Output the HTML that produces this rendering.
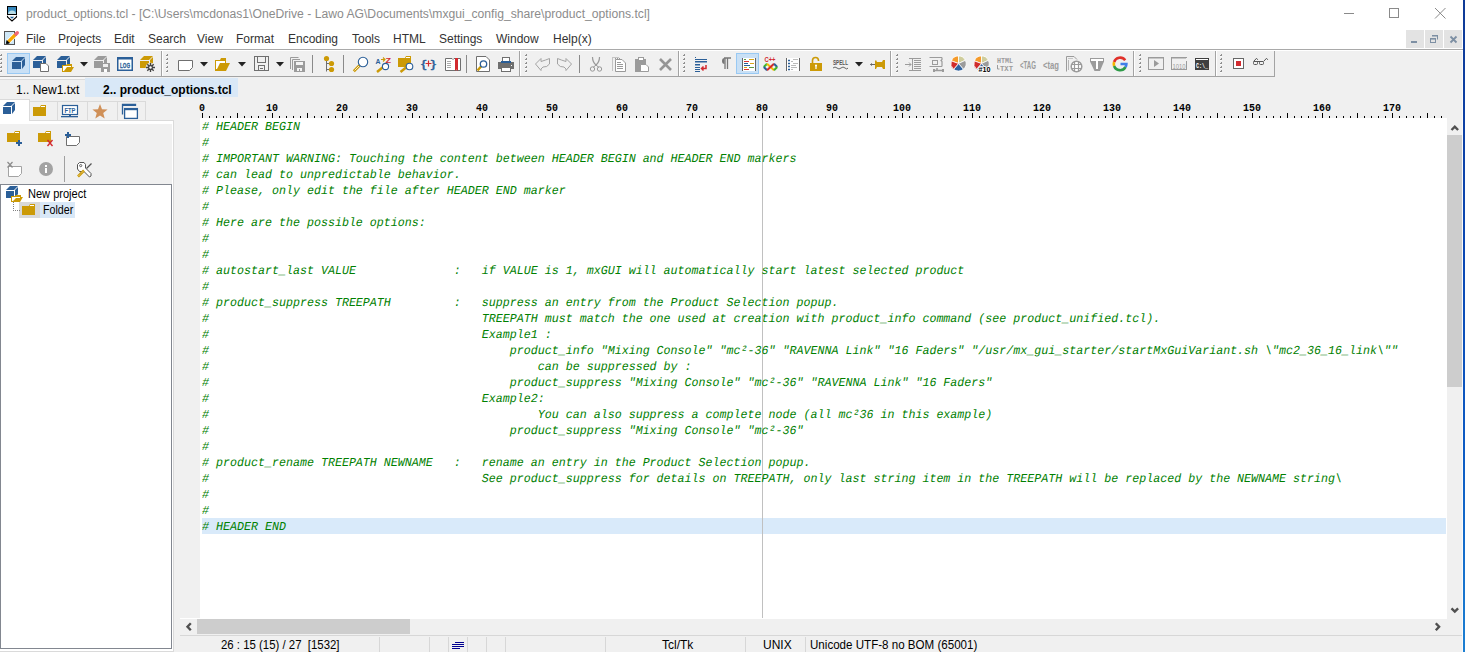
<!DOCTYPE html>
<html><head><meta charset="utf-8">
<style>
*{margin:0;padding:0;box-sizing:border-box}
html,body{width:1465px;height:652px;overflow:hidden;background:#f0f0f0;font-family:"Liberation Sans",sans-serif;position:relative}
.a{position:absolute}
#title{left:0;top:0;width:1465px;height:49px;background:#fff}
#ttext{left:26px;top:7px;font-size:12.5px;transform:scaleX(0.973);transform-origin:0 0;color:#8c8c8c;white-space:nowrap}
.menu{top:32px;font-size:12px;color:#333;white-space:nowrap}
#mline{left:0;top:49px;width:1463px;height:1px;background:#a9a9a9}
#blue{left:1463px;top:0;width:2px;height:652px;background:linear-gradient(#0f3a96,#0b48b4 40%,#0d5cc4 70%,#1c7fd2)}
.mdi{top:30px;width:18px;height:18px;background:#e3e3e3}
#code{left:202px;top:119px;font-family:"Liberation Mono",monospace;font-style:italic;font-size:12.2px;line-height:16px;transform:scaleX(0.9563);text-rendering:geometricPrecision;transform-origin:0 0;color:#008000;white-space:pre}
#editor{left:200px;top:118px;width:1247px;height:501px;background:#fff}
#hl{left:202px;top:518px;width:1244px;height:16px;background:#d9eafa}
#edge{left:762px;top:118px;width:1px;height:500px;background:#c0c0c0}
#ruler{left:178px;top:97px;width:1268px;height:21px}
.rn{top:104px;width:80px;text-align:center;font-family:"Liberation Mono",monospace;font-weight:bold;font-size:10px;line-height:10px;color:#000}
#status{left:178px;top:635px;width:1285px;height:17px;font-size:12px}
#panel{left:0;top:120px;width:174px;height:530px}

#tb{left:0;top:50px;width:1463px;height:1px;background:#fff}
#tbb{left:0;top:76px;width:1275px;height:1px;background:#a3a3a3}
#tabs{left:0;top:77px;width:1463px;height:20px}
.tab{top:78px;height:19px;font-size:12px;white-space:nowrap}
#ptabs{left:0;top:97px;width:174px;height:24px}
.ptab{top:101px;height:20px;border:1px solid #dadada;border-bottom:1px solid #dadada;background:#f0f0f0}
#pbody{left:0;top:120px;width:174px;height:532px;background:#f0f0f0;border-top:1px solid #dadada;border-right:1px solid #dadada;box-shadow:inset 0 3px #fff,inset -1px 0 #fff}
#tree{left:0;top:184px;width:172px;height:465px;background:#fff;border:1px solid #828790}
.tt{font-size:12px;color:#000;white-space:nowrap}
#hsb{left:180px;top:619px;width:1282px;height:17px;background:#f0f0f0;border-bottom:1px solid #d7d7d7}
#hsbw{left:180px;top:618px;width:1267px;height:1px;background:#fff}
#hthumb{left:197px;top:619px;width:213px;height:15px;background:#cdcdcd}
#vthumb{left:1447px;top:135px;width:15px;height:252px;background:#cdcdcd}
.st{top:638px;transform-origin:0 0;font-size:12px;color:#000;white-space:nowrap}
.ss{top:637px;width:1px;height:16px;background:#d7d7d7}
</style></head><body>
<div class="a" id="title"></div>
<div class="a" id="ttext">product_options.tcl - [C:\Users\mcdonas1\OneDrive - Lawo AG\Documents\mxgui_config_share\product_options.tcl]</div>
<div class="a menu" style="left:26px">File</div>
<div class="a menu" style="left:58px">Projects</div>
<div class="a menu" style="left:114px">Edit</div>
<div class="a menu" style="left:148px">Search</div>
<div class="a menu" style="left:197px">View</div>
<div class="a menu" style="left:236px">Format</div>
<div class="a menu" style="left:288px">Encoding</div>
<div class="a menu" style="left:352px">Tools</div>
<div class="a menu" style="left:393px">HTML</div>
<div class="a menu" style="left:439px">Settings</div>
<div class="a menu" style="left:496px">Window</div>
<div class="a menu" style="left:553px">Help(x)</div>
<div class="a mdi" style="left:1406px"></div>
<div class="a mdi" style="left:1425px"></div>
<div class="a mdi" style="left:1444px"></div>
<div class="a" id="mline"></div>

<div class="a" id="rulerwrap">
<div class="a rn" style="left:162px">0</div>
<div class="a rn" style="left:232px">10</div>
<div class="a rn" style="left:302px">20</div>
<div class="a rn" style="left:372px">30</div>
<div class="a rn" style="left:442px">40</div>
<div class="a rn" style="left:512px">50</div>
<div class="a rn" style="left:582px">60</div>
<div class="a rn" style="left:652px">70</div>
<div class="a rn" style="left:722px">80</div>
<div class="a rn" style="left:792px">90</div>
<div class="a rn" style="left:862px">100</div>
<div class="a rn" style="left:932px">110</div>
<div class="a rn" style="left:1002px">120</div>
<div class="a rn" style="left:1072px">130</div>
<div class="a rn" style="left:1142px">140</div>
<div class="a rn" style="left:1212px">150</div>
<div class="a rn" style="left:1282px">160</div>
<div class="a rn" style="left:1352px">170</div>
<svg class="a" style="left:200px;top:110px" width="1246" height="8"><rect x="2" y="3" width="1" height="5"/><rect x="9" y="6" width="1" height="2"/><rect x="16" y="6" width="1" height="2"/><rect x="23" y="6" width="1" height="2"/><rect x="30" y="6" width="1" height="2"/><rect x="37" y="3" width="1" height="5"/><rect x="44" y="6" width="1" height="2"/><rect x="51" y="6" width="1" height="2"/><rect x="58" y="6" width="1" height="2"/><rect x="65" y="6" width="1" height="2"/><rect x="72" y="3" width="1" height="5"/><rect x="79" y="6" width="1" height="2"/><rect x="86" y="6" width="1" height="2"/><rect x="93" y="6" width="1" height="2"/><rect x="100" y="6" width="1" height="2"/><rect x="107" y="3" width="1" height="5"/><rect x="114" y="6" width="1" height="2"/><rect x="121" y="6" width="1" height="2"/><rect x="128" y="6" width="1" height="2"/><rect x="135" y="6" width="1" height="2"/><rect x="142" y="3" width="1" height="5"/><rect x="149" y="6" width="1" height="2"/><rect x="156" y="6" width="1" height="2"/><rect x="163" y="6" width="1" height="2"/><rect x="170" y="6" width="1" height="2"/><rect x="177" y="3" width="1" height="5"/><rect x="184" y="6" width="1" height="2"/><rect x="191" y="6" width="1" height="2"/><rect x="198" y="6" width="1" height="2"/><rect x="205" y="6" width="1" height="2"/><rect x="212" y="3" width="1" height="5"/><rect x="219" y="6" width="1" height="2"/><rect x="226" y="6" width="1" height="2"/><rect x="233" y="6" width="1" height="2"/><rect x="240" y="6" width="1" height="2"/><rect x="247" y="3" width="1" height="5"/><rect x="254" y="6" width="1" height="2"/><rect x="261" y="6" width="1" height="2"/><rect x="268" y="6" width="1" height="2"/><rect x="275" y="6" width="1" height="2"/><rect x="282" y="3" width="1" height="5"/><rect x="289" y="6" width="1" height="2"/><rect x="296" y="6" width="1" height="2"/><rect x="303" y="6" width="1" height="2"/><rect x="310" y="6" width="1" height="2"/><rect x="317" y="3" width="1" height="5"/><rect x="324" y="6" width="1" height="2"/><rect x="331" y="6" width="1" height="2"/><rect x="338" y="6" width="1" height="2"/><rect x="345" y="6" width="1" height="2"/><rect x="352" y="3" width="1" height="5"/><rect x="359" y="6" width="1" height="2"/><rect x="366" y="6" width="1" height="2"/><rect x="373" y="6" width="1" height="2"/><rect x="380" y="6" width="1" height="2"/><rect x="387" y="3" width="1" height="5"/><rect x="394" y="6" width="1" height="2"/><rect x="401" y="6" width="1" height="2"/><rect x="408" y="6" width="1" height="2"/><rect x="415" y="6" width="1" height="2"/><rect x="422" y="3" width="1" height="5"/><rect x="429" y="6" width="1" height="2"/><rect x="436" y="6" width="1" height="2"/><rect x="443" y="6" width="1" height="2"/><rect x="450" y="6" width="1" height="2"/><rect x="457" y="3" width="1" height="5"/><rect x="464" y="6" width="1" height="2"/><rect x="471" y="6" width="1" height="2"/><rect x="478" y="6" width="1" height="2"/><rect x="485" y="6" width="1" height="2"/><rect x="492" y="3" width="1" height="5"/><rect x="499" y="6" width="1" height="2"/><rect x="506" y="6" width="1" height="2"/><rect x="513" y="6" width="1" height="2"/><rect x="520" y="6" width="1" height="2"/><rect x="527" y="3" width="1" height="5"/><rect x="534" y="6" width="1" height="2"/><rect x="541" y="6" width="1" height="2"/><rect x="548" y="6" width="1" height="2"/><rect x="555" y="6" width="1" height="2"/><rect x="562" y="3" width="1" height="5"/><rect x="569" y="6" width="1" height="2"/><rect x="576" y="6" width="1" height="2"/><rect x="583" y="6" width="1" height="2"/><rect x="590" y="6" width="1" height="2"/><rect x="597" y="3" width="1" height="5"/><rect x="604" y="6" width="1" height="2"/><rect x="611" y="6" width="1" height="2"/><rect x="618" y="6" width="1" height="2"/><rect x="625" y="6" width="1" height="2"/><rect x="632" y="3" width="1" height="5"/><rect x="639" y="6" width="1" height="2"/><rect x="646" y="6" width="1" height="2"/><rect x="653" y="6" width="1" height="2"/><rect x="660" y="6" width="1" height="2"/><rect x="667" y="3" width="1" height="5"/><rect x="674" y="6" width="1" height="2"/><rect x="681" y="6" width="1" height="2"/><rect x="688" y="6" width="1" height="2"/><rect x="695" y="6" width="1" height="2"/><rect x="702" y="3" width="1" height="5"/><rect x="709" y="6" width="1" height="2"/><rect x="716" y="6" width="1" height="2"/><rect x="723" y="6" width="1" height="2"/><rect x="730" y="6" width="1" height="2"/><rect x="737" y="3" width="1" height="5"/><rect x="744" y="6" width="1" height="2"/><rect x="751" y="6" width="1" height="2"/><rect x="758" y="6" width="1" height="2"/><rect x="765" y="6" width="1" height="2"/><rect x="772" y="3" width="1" height="5"/><rect x="779" y="6" width="1" height="2"/><rect x="786" y="6" width="1" height="2"/><rect x="793" y="6" width="1" height="2"/><rect x="800" y="6" width="1" height="2"/><rect x="807" y="3" width="1" height="5"/><rect x="814" y="6" width="1" height="2"/><rect x="821" y="6" width="1" height="2"/><rect x="828" y="6" width="1" height="2"/><rect x="835" y="6" width="1" height="2"/><rect x="842" y="3" width="1" height="5"/><rect x="849" y="6" width="1" height="2"/><rect x="856" y="6" width="1" height="2"/><rect x="863" y="6" width="1" height="2"/><rect x="870" y="6" width="1" height="2"/><rect x="877" y="3" width="1" height="5"/><rect x="884" y="6" width="1" height="2"/><rect x="891" y="6" width="1" height="2"/><rect x="898" y="6" width="1" height="2"/><rect x="905" y="6" width="1" height="2"/><rect x="912" y="3" width="1" height="5"/><rect x="919" y="6" width="1" height="2"/><rect x="926" y="6" width="1" height="2"/><rect x="933" y="6" width="1" height="2"/><rect x="940" y="6" width="1" height="2"/><rect x="947" y="3" width="1" height="5"/><rect x="954" y="6" width="1" height="2"/><rect x="961" y="6" width="1" height="2"/><rect x="968" y="6" width="1" height="2"/><rect x="975" y="6" width="1" height="2"/><rect x="982" y="3" width="1" height="5"/><rect x="989" y="6" width="1" height="2"/><rect x="996" y="6" width="1" height="2"/><rect x="1003" y="6" width="1" height="2"/><rect x="1010" y="6" width="1" height="2"/><rect x="1017" y="3" width="1" height="5"/><rect x="1024" y="6" width="1" height="2"/><rect x="1031" y="6" width="1" height="2"/><rect x="1038" y="6" width="1" height="2"/><rect x="1045" y="6" width="1" height="2"/><rect x="1052" y="3" width="1" height="5"/><rect x="1059" y="6" width="1" height="2"/><rect x="1066" y="6" width="1" height="2"/><rect x="1073" y="6" width="1" height="2"/><rect x="1080" y="6" width="1" height="2"/><rect x="1087" y="3" width="1" height="5"/><rect x="1094" y="6" width="1" height="2"/><rect x="1101" y="6" width="1" height="2"/><rect x="1108" y="6" width="1" height="2"/><rect x="1115" y="6" width="1" height="2"/><rect x="1122" y="3" width="1" height="5"/><rect x="1129" y="6" width="1" height="2"/><rect x="1136" y="6" width="1" height="2"/><rect x="1143" y="6" width="1" height="2"/><rect x="1150" y="6" width="1" height="2"/><rect x="1157" y="3" width="1" height="5"/><rect x="1164" y="6" width="1" height="2"/><rect x="1171" y="6" width="1" height="2"/><rect x="1178" y="6" width="1" height="2"/><rect x="1185" y="6" width="1" height="2"/><rect x="1192" y="3" width="1" height="5"/><rect x="1199" y="6" width="1" height="2"/><rect x="1206" y="6" width="1" height="2"/><rect x="1213" y="6" width="1" height="2"/><rect x="1220" y="6" width="1" height="2"/><rect x="1227" y="3" width="1" height="5"/><rect x="1234" y="6" width="1" height="2"/><rect x="1241" y="6" width="1" height="2"/></svg>
</div>
<div class="a" id="editor"></div>
<div class="a" id="hl"></div>
<div class="a" id="edge"></div>
<pre class="a" id="code"># HEADER BEGIN
#
# IMPORTANT WARNING: Touching the content between HEADER BEGIN and HEADER END markers
# can lead to unpredictable behavior.
# Please, only edit the file after HEADER END marker
#
# Here are the possible options:
#
#
# autostart_last VALUE              :   if VALUE is 1, mxGUI will automatically start latest selected product
#
# product_suppress TREEPATH         :   suppress an entry from the Product Selection popup.
#                                       TREEPATH must match the one used at creation with product_info command (see product_unified.tcl).
#                                       Example1 :
#                                           product_info "Mixing Console" "mc²-36" "RAVENNA Link" "16 Faders" "/usr/mx_gui_starter/startMxGuiVariant.sh \"mc2_36_16_link\""
#                                               can be suppressed by :
#                                           product_suppress "Mixing Console" "mc²-36" "RAVENNA Link" "16 Faders"
#                                       Example2:
#                                               You can also suppress a complete node (all mc²36 in this example)
#                                           product_suppress "Mixing Console" "mc²-36"
#
# product_rename TREEPATH NEWNAME   :   rename an entry in the Product Selection popup.
#                                       See product_suppress for details on TREEPATH, only last string item in the TREEPATH will be replaced by the NEWNAME string\
#
#
# HEADER END</pre>

<div class="a" id="tb"></div><div class="a" id="tbb"></div>
<!--TB--><svg class="a" style="left:0;top:0" width="1280" height="78"><rect x="1" y="54" width="1" height="2" fill="#8f8f8f"/><rect x="0" y="55" width="1" height="1" fill="#8f8f8f"/><rect x="0" y="56" width="2" height="1" fill="#fafafa"/><rect x="1" y="58" width="1" height="2" fill="#8f8f8f"/><rect x="0" y="59" width="1" height="1" fill="#8f8f8f"/><rect x="0" y="60" width="2" height="1" fill="#fafafa"/><rect x="1" y="62" width="1" height="2" fill="#8f8f8f"/><rect x="0" y="63" width="1" height="1" fill="#8f8f8f"/><rect x="0" y="64" width="2" height="1" fill="#fafafa"/><rect x="1" y="66" width="1" height="2" fill="#8f8f8f"/><rect x="0" y="67" width="1" height="1" fill="#8f8f8f"/><rect x="0" y="68" width="2" height="1" fill="#fafafa"/><rect x="1" y="70" width="1" height="2" fill="#8f8f8f"/><rect x="0" y="71" width="1" height="1" fill="#8f8f8f"/><rect x="0" y="72" width="2" height="1" fill="#fafafa"/><rect x="7.5" y="53.5" width="22" height="20" fill="#c9e0f5" stroke="#99c9f3"/><polygon points="12,61 16,57 25,57 21,61" fill="#2b5f98"/><rect x="12" y="62" width="9" height="7" fill="#2b5f98"/><polygon points="22,61 25,58 25,65 22,69" fill="#2b5f98"/><polygon points="33,60 37,56 46,56 42,60" fill="#2b5f98"/><rect x="33" y="61" width="9" height="7" fill="#2b5f98"/><polygon points="43,60 46,57 46,64 43,68" fill="#2b5f98"/><path d="M40.5,63.5 H46 L48.5,66 V71.5 H40.5 Z" fill="#fff" stroke="#6f6f6f"/><polygon points="57,60 61,56 70,56 66,60" fill="#2b5f98"/><rect x="57" y="61" width="9" height="7" fill="#2b5f98"/><polygon points="67,60 70,57 70,64 67,68" fill="#2b5f98"/><path d="M62,65 h4 l1,-1 h5 v3 h2 l-3,5 h-9 z" fill="#cc9a06"/><path d="M63,66 h8 v1 h-4 l-3,4 h-1z" fill="#fff"/><polygon points="80,62 88,62 84,66.5" fill="#222"/><polygon points="94,60 98,56 107,56 103,60" fill="#9b9b9b"/><rect x="94" y="61" width="9" height="7" fill="#9b9b9b"/><polygon points="104,60 107,57 107,64 104,68" fill="#9b9b9b"/><rect x="101" y="63" width="9" height="9" fill="#9b9b9b"/><rect x="103" y="64" width="5" height="3" fill="#eee"/><rect x="104" y="69" width="3" height="3" fill="#fff"/><rect x="117.75" y="57.75" width="14.5" height="12.5" fill="#fff" stroke="#2b5f98" stroke-width="1.5"/><rect x="117" y="57" width="16" height="2.5" fill="#2b5f98"/><text x="125" y="68" font-family="Liberation Sans" font-weight="bold" font-size="7.5" fill="#2b5f98" stroke="#2b5f98" stroke-width=".3" text-anchor="middle" textLength="10" lengthAdjust="spacingAndGlyphs">LOG</text><polygon points="140,60 144,56 153,56 149,60" fill="#cc9a06"/><rect x="140" y="61" width="9" height="7" fill="#cc9a06"/><polygon points="150,60 153,57 153,64 150,68" fill="#cc9a06"/><g transform="translate(150.5,67.5)"><circle r="4.8" fill="#f0f0f0" opacity=".9"/><path d="M0,-4.5V4.5M-4.5,0H4.5M-3.2,-3.2L3.2,3.2M-3.2,3.2L3.2,-3.2" stroke="#444" stroke-width="1.4"/><circle r="2.4" fill="#444"/><circle r="1.2" fill="#fff"/></g><rect x="161" y="51" width="1" height="25" fill="#a3a3a3"/><rect x="162" y="51" width="1" height="25" fill="#fff"/><rect x="167" y="54" width="1" height="2" fill="#8f8f8f"/><rect x="166" y="55" width="1" height="1" fill="#8f8f8f"/><rect x="166" y="56" width="2" height="1" fill="#fafafa"/><rect x="167" y="58" width="1" height="2" fill="#8f8f8f"/><rect x="166" y="59" width="1" height="1" fill="#8f8f8f"/><rect x="166" y="60" width="2" height="1" fill="#fafafa"/><rect x="167" y="62" width="1" height="2" fill="#8f8f8f"/><rect x="166" y="63" width="1" height="1" fill="#8f8f8f"/><rect x="166" y="64" width="2" height="1" fill="#fafafa"/><rect x="167" y="66" width="1" height="2" fill="#8f8f8f"/><rect x="166" y="67" width="1" height="1" fill="#8f8f8f"/><rect x="166" y="68" width="2" height="1" fill="#fafafa"/><rect x="167" y="70" width="1" height="2" fill="#8f8f8f"/><rect x="166" y="71" width="1" height="1" fill="#8f8f8f"/><rect x="166" y="72" width="2" height="1" fill="#fafafa"/><path d="M178.5,60.5 H192.5 V67.5 L189.5,70.5 H178.5 Z" fill="#fff" stroke="#6f6f6f" stroke-width="1"/><polygon points="200,62 208,62 204,66.5" fill="#222"/><path d="M215,60 h5 l1,-2 h5 v5 h4 l-4,8 h-11 z" fill="#cc9a06"/><path d="M216,61 h9 v2 h-5 l-3,6 h-1 z" fill="#fff"/><polygon points="238,62 246,62 242,66.5" fill="#222"/><rect x="254.5" y="56.5" width="14" height="14" fill="none" stroke="#6f6f6f"/><rect x="257.5" y="56.5" width="8" height="6" fill="none" stroke="#6f6f6f"/><rect x="258.5" y="65.5" width="6" height="5" fill="none" stroke="#6f6f6f"/><rect x="260" y="68" width="3" height="1" fill="#6f6f6f"/><polygon points="276,62 284,62 280,66.5" fill="#222"/><path d="M290.5,69 V57.5 H298.5 M292.5,70 V59.5 H300" fill="none" stroke="#9b9b9b"/><rect x="294" y="61" width="11" height="11" fill="#9b9b9b"/><rect x="296" y="62" width="7" height="3" fill="#f4f4f4"/><rect x="297" y="68" width="5" height="3" fill="#f4f4f4"/><rect x="299" y="69" width="1" height="2" fill="#9b9b9b"/><rect x="312" y="55" width="1" height="18" fill="#8a8a8a"/><path d="M326.5,59 V71.5 M326.5,63.5 H331 M326.5,69.5 H331" stroke="#6f6f6f" fill="none"/><circle cx="326.5" cy="58.5" r="2.6" fill="#cc9a06"/><circle cx="331.5" cy="63.5" r="2.6" fill="#cc9a06"/><circle cx="331.5" cy="69.5" r="2.6" fill="#cc9a06"/><rect x="343" y="55" width="1" height="18" fill="#8a8a8a"/><line x1="353.8" y1="71.2" x2="359.5" y2="65.5" stroke="#cc9a06" stroke-width="2.8"/><line x1="354.6" y1="70.4" x2="359" y2="66" stroke="#fff" stroke-width=".8"/><circle cx="363" cy="62" r="4.7" fill="#fff" stroke="#2b5f98" stroke-width="1.1"/><text x="375.5" y="64" font-family="Liberation Sans" font-weight="bold" font-size="8" fill="#2b5f98" textLength="5" lengthAdjust="spacingAndGlyphs">A</text><path d="M381,59.5 h4 m-2,-2 l2,2 l-2,2" stroke="#cc9a06" fill="none" stroke-width="1.1"/><text x="385.5" y="62.5" font-family="Liberation Sans" font-weight="bold" font-size="8" fill="#d22a2f" textLength="5.5" lengthAdjust="spacingAndGlyphs">Z</text><line x1="377" y1="72" x2="382.5" y2="67.5" stroke="#cc9a06" stroke-width="2.4"/><circle cx="385.5" cy="66.5" r="3.1" fill="#fff" stroke="#2b5f98" stroke-width="1.1"/><path d="M398,58 h7 l1,-2 h5 v11 h-13 z" fill="#cc9a06"/><rect x="406" y="57" width="4" height="1" fill="#fff"/><line x1="400.5" y1="72" x2="406" y2="67.5" stroke="#cc9a06" stroke-width="2.4"/><circle cx="409.5" cy="66.5" r="3.3" fill="#fff" stroke="#2b5f98" stroke-width="1.1"/><text x="428.5" y="67.5" font-family="Liberation Sans" font-size="11" fill="#2b5f98" text-anchor="middle" textLength="15" lengthAdjust="spacingAndGlyphs" stroke="#2b5f98" stroke-width=".4">{ }</text><path d="M428.5,60.5 v6 M425.5,63.5 h6" stroke="#d22a2f" stroke-width="1.2"/><path d="M445.5,58.5 H452 L453,59.5 L454,58.5 H460.5 V70.5 H445.5 Z" fill="#fff" stroke="#6f6f6f"/><path d="M447,61.5h4M447,63.5h4M447,65.5h4M447,67.5h4" stroke="#aaa"/><path d="M455,58 h3 v13 l-1.5,-1.5 l-1.5,1.5z" fill="#d22a2f"/><rect x="466" y="55" width="1" height="18" fill="#8a8a8a"/><path d="M476.5,56.5 H486 L489.5,60 V71.5 H476.5 Z" fill="#fff" stroke="#6f6f6f"/><line x1="481.26" y1="66.24" x2="477.5" y2="70.5" stroke="#cc9a06" stroke-width="2.4" stroke-linecap="butt"/><circle cx="483.5" cy="64" r="3.2" fill="#fff" stroke="#2b5f98" stroke-width="1.3"/><rect x="502.5" y="57.5" width="7" height="4" fill="#fff" stroke="#6f6f6f"/><rect x="498" y="62" width="16" height="7" fill="#6f6f6f"/><rect x="501" y="61" width="10" height="2" fill="#2b5f98"/><rect x="501.5" y="67.5" width="9" height="4" fill="#fff" stroke="#6f6f6f"/><rect x="511" y="65" width="1" height="1" fill="#fff"/><rect x="519" y="51" width="1" height="25" fill="#a3a3a3"/><rect x="520" y="51" width="1" height="25" fill="#fff"/><rect x="526" y="54" width="1" height="2" fill="#8f8f8f"/><rect x="525" y="55" width="1" height="1" fill="#8f8f8f"/><rect x="525" y="56" width="2" height="1" fill="#fafafa"/><rect x="526" y="58" width="1" height="2" fill="#8f8f8f"/><rect x="525" y="59" width="1" height="1" fill="#8f8f8f"/><rect x="525" y="60" width="2" height="1" fill="#fafafa"/><rect x="526" y="62" width="1" height="2" fill="#8f8f8f"/><rect x="525" y="63" width="1" height="1" fill="#8f8f8f"/><rect x="525" y="64" width="2" height="1" fill="#fafafa"/><rect x="526" y="66" width="1" height="2" fill="#8f8f8f"/><rect x="525" y="67" width="1" height="1" fill="#8f8f8f"/><rect x="525" y="68" width="2" height="1" fill="#fafafa"/><rect x="526" y="70" width="1" height="2" fill="#8f8f8f"/><rect x="525" y="71" width="1" height="1" fill="#8f8f8f"/><rect x="525" y="72" width="2" height="1" fill="#fafafa"/><path d="M535.5,64 L541,58.5 V61.5 Q546,60 549.5,58.5 V64 Q547,67.5 543,67 L541,69 V70.5 Z" fill="none" stroke="#a3a3a3"/><path d="M571.5,64 L566,58.5 V61.5 Q561,60 557.5,58.5 V64 Q560,67.5 564,67 L566,69 V70.5 Z" fill="none" stroke="#a3a3a3"/><rect x="579" y="55" width="1" height="18" fill="#8a8a8a"/><path d="M592.5,57 Q592.5,62 596,65 Q599.5,62 599.5,57" fill="none" stroke="#999" stroke-width="1.2"/><path d="M596,65 L593,67.5 M596,65 L599,67.5" stroke="#999"/><circle cx="592.5" cy="69" r="2.2" fill="none" stroke="#999"/><circle cx="599.5" cy="69" r="2.2" fill="none" stroke="#999"/><path d="M612.5,70.5 V57.5 H619.5 M615,58.5 H620" fill="none" stroke="#999" stroke-dasharray="1,1"/><path d="M615.5,59.5 H622 L625.5,63 V71.5 H615.5 Z" fill="#fff" stroke="#999"/><path d="M617,64.5h6M617,66.5h6M617,68.5h6M617,62.5h4" stroke="#999"/><rect x="635" y="59" width="11" height="13" fill="#9b9b9b"/><rect x="638.5" y="57.5" width="5" height="3" fill="#fff" stroke="#9b9b9b"/><path d="M640.5,64.5 H646 L648.5,67 V71.5 H640.5 Z" fill="#fff" stroke="#9b9b9b"/><path d="M660,59 L671,70 M671,59 L660,70" stroke="#959595" stroke-width="2.6"/><rect x="678" y="51" width="1" height="25" fill="#a3a3a3"/><rect x="679" y="51" width="1" height="25" fill="#fff"/><rect x="684" y="54" width="1" height="2" fill="#8f8f8f"/><rect x="683" y="55" width="1" height="1" fill="#8f8f8f"/><rect x="683" y="56" width="2" height="1" fill="#fafafa"/><rect x="684" y="58" width="1" height="2" fill="#8f8f8f"/><rect x="683" y="59" width="1" height="1" fill="#8f8f8f"/><rect x="683" y="60" width="2" height="1" fill="#fafafa"/><rect x="684" y="62" width="1" height="2" fill="#8f8f8f"/><rect x="683" y="63" width="1" height="1" fill="#8f8f8f"/><rect x="683" y="64" width="2" height="1" fill="#fafafa"/><rect x="684" y="66" width="1" height="2" fill="#8f8f8f"/><rect x="683" y="67" width="1" height="1" fill="#8f8f8f"/><rect x="683" y="68" width="2" height="1" fill="#fafafa"/><rect x="684" y="70" width="1" height="2" fill="#8f8f8f"/><rect x="683" y="71" width="1" height="1" fill="#8f8f8f"/><rect x="683" y="72" width="2" height="1" fill="#fafafa"/><rect x="695" y="57" width="1" height="1" fill="#2b5f98"/><rect x="695" y="59" width="12" height="1" fill="#2b5f98"/><rect x="695" y="61" width="12" height="1.5" fill="#2b5f98"/><rect x="695" y="64" width="5" height="1.5" fill="#2b5f98"/><rect x="695" y="67" width="5" height="1" fill="#2b5f98"/><rect x="695" y="69" width="5" height="1" fill="#2b5f98"/><rect x="695" y="71" width="5" height="1" fill="#2b5f98"/><path d="M706,65 V68.5 H702 M703.5,66.5 L701.5,68.5 L703.5,70.5" fill="none" stroke="#d22a2f" stroke-width="1.5"/><path d="M727.5,58 V69 M725,58 V69 M724,58 H731" stroke="#777" stroke-width="1.3"/><path d="M724.5,58 A2.5,3 0 0 0 724.5,64 Z" fill="#777"/><rect x="736.5" y="53.5" width="22" height="20" fill="#c9e0f5" stroke="#99c9f3"/><rect x="742" y="58" width="1" height="13" fill="#666"/><rect x="755" y="58" width="1" height="13" fill="#666"/><rect x="743" y="58" width="12" height="13" fill="#fff"/><path d="M744,59.5h2M749,59.5h5M744,61.5h5M744,63.5h4M750,63.5h4M744,65.5h6M744,67.5h3M749,67.5h5M744,69.5h5" stroke-width="1"/><path d="M744,59.5h2" stroke="#5a9a4a"/><path d="M749,59.5h5" stroke="#d9a51a"/><path d="M744,61.5h5" stroke="#d33"/><path d="M744,63.5h4" stroke="#2b5f98"/><path d="M750,63.5h4" stroke="#d9a51a"/><path d="M744,65.5h6" stroke="#2b5f98"/><path d="M744,67.5h3" stroke="#d9a51a"/><path d="M749,67.5h5" stroke="#5a9a4a"/><path d="M744,69.5h5" stroke="#d33"/><text x="764.5" y="62" font-family="Liberation Sans" font-weight="bold" font-size="6.5" fill="#d22a2f" textLength="11" lengthAdjust="spacingAndGlyphs">C++</text><path d="M763.8,67 L767,63.8" stroke="#3fb52a" stroke-width="2"/><path d="M763.8,67 L767,70.2" stroke="#2b5f98" stroke-width="2"/><path d="M767,63.8 L774,70.2" stroke="#f5b800" stroke-width="2"/><path d="M767,70.2 L774,63.8" stroke="#d42a2a" stroke-width="2"/><path d="M774,63.8 L777.2,67" stroke="#2b5f98" stroke-width="2"/><path d="M774,70.2 L777.2,67" stroke="#3fb52a" stroke-width="2"/><rect x="786" y="58" width="1" height="13" fill="#666"/><rect x="799" y="58" width="1" height="13" fill="#666"/><rect x="787" y="58" width="12" height="13" fill="#fff"/><path d="M788,60.5h2M788,63.5h2M788,66.5h2M788,69.5h2" stroke="#2b5f98" stroke-width="1.4"/><path d="M793,59.5h5M791,61.5h2M793,63.5h5M791,65.5h5M791,67.5h6M791,69.5h2" stroke="#bbb"/><path d="M812.5,63 V60.5 A3,3 0 0 1 818.5,60.5 V61" fill="none" stroke="#cc9a06" stroke-width="1.6"/><rect x="810" y="63" width="12" height="8" fill="#cc9a06"/><path d="M816,65 v4" stroke="#fff" stroke-width="1.2"/><circle cx="816" cy="65.5" r="1" fill="#fff"/><text x="840.5" y="65" font-family="Liberation Sans" font-weight="bold" font-size="6.5" fill="#555" text-anchor="middle" textLength="15" lengthAdjust="spacingAndGlyphs">SPELL</text><path d="M833,68 q2,-2 4,0 t4,0 t4,0 t3,0" fill="none" stroke="#666"/><polygon points="855,62 863,62 859,66.5" fill="#222"/><path d="M875,64.5 H870.5 L872,63.5 M870.5,64.5 L872,65.5" stroke="#666" fill="none"/><path d="M875,61 L876,60 L877,62 H882 L883,60 L885,60 V69 H883 L882,67 H877 L876,69 L875,69 Z" fill="#cc9a06"/><rect x="890" y="51" width="1" height="25" fill="#a3a3a3"/><rect x="891" y="51" width="1" height="25" fill="#fff"/><rect x="897" y="54" width="1" height="2" fill="#8f8f8f"/><rect x="896" y="55" width="1" height="1" fill="#8f8f8f"/><rect x="896" y="56" width="2" height="1" fill="#fafafa"/><rect x="897" y="58" width="1" height="2" fill="#8f8f8f"/><rect x="896" y="59" width="1" height="1" fill="#8f8f8f"/><rect x="896" y="60" width="2" height="1" fill="#fafafa"/><rect x="897" y="62" width="1" height="2" fill="#8f8f8f"/><rect x="896" y="63" width="1" height="1" fill="#8f8f8f"/><rect x="896" y="64" width="2" height="1" fill="#fafafa"/><rect x="897" y="66" width="1" height="2" fill="#8f8f8f"/><rect x="896" y="67" width="1" height="1" fill="#8f8f8f"/><rect x="896" y="68" width="2" height="1" fill="#fafafa"/><rect x="897" y="70" width="1" height="2" fill="#8f8f8f"/><rect x="896" y="71" width="1" height="1" fill="#8f8f8f"/><rect x="896" y="72" width="2" height="1" fill="#fafafa"/><path d="M905,64.5 H911 M909,62.5 L911,64.5 L909,66.5" stroke="#9b9b9b" fill="none"/><rect x="912" y="58" width="1" height="13" fill="#9b9b9b"/><path d="M909,58.5 H921 M914,60.5H921 M914,62.5H921 M914,64.5H921 M914,66.5H921 M914,68.5H921 M909,70.5H921" stroke="#9b9b9b"/><path d="M929.5,57.5 H942 M929.5,66.5 H942 M942,57.5 v2 l-1,1 l1,1 v5" fill="none" stroke="#9b9b9b" stroke-width="1.2"/><rect x="932.5" y="60.5" width="5" height="4" fill="none" stroke="#9b9b9b"/><path d="M937,68 v2.5 M934,70.5 H944" stroke="#9b9b9b" stroke-width="1.5"/><rect x="933" y="69" width="2" height="3" fill="#9b9b9b"/><rect x="942" y="69" width="2" height="3" fill="#9b9b9b"/><path d="M958.5,63.5 L951.36,60.90 A7.6,7.6 0 0 1 958.50,55.90 Z" fill="#f59a2a" stroke="#fff" stroke-width="0.8"/><path d="M958.5,63.5 L958.50,55.90 A7.6,7.6 0 0 1 965.39,60.29 Z" fill="#cfcd9c" stroke="#fff" stroke-width="0.8"/><path d="M958.5,63.5 L965.39,60.29 A7.6,7.6 0 0 1 963.39,69.32 Z" fill="#9b9b9b" stroke="#fff" stroke-width="0.8"/><path d="M958.5,63.5 L963.39,69.32 A7.6,7.6 0 0 1 953.61,69.32 Z" fill="#2f62a0" stroke="#fff" stroke-width="0.8"/><path d="M958.5,63.5 L953.61,69.32 A7.6,7.6 0 0 1 951.36,60.90 Z" fill="#cf2b2b" stroke="#fff" stroke-width="0.8"/><path d="M981.5,63.5 L974.36,60.90 A7.6,7.6 0 0 1 981.50,55.90 Z" fill="#f59a2a" stroke="#fff" stroke-width="0.8"/><path d="M981.5,63.5 L981.50,55.90 A7.6,7.6 0 0 1 988.39,60.29 Z" fill="#cfcd9c" stroke="#fff" stroke-width="0.8"/><path d="M981.5,63.5 L988.39,60.29 A7.6,7.6 0 0 1 986.39,69.32 Z" fill="#9b9b9b" stroke="#fff" stroke-width="0.8"/><path d="M981.5,63.5 L986.39,69.32 A7.6,7.6 0 0 1 976.61,69.32 Z" fill="#2f62a0" stroke="#fff" stroke-width="0.8"/><path d="M981.5,63.5 L976.61,69.32 A7.6,7.6 0 0 1 974.36,60.90 Z" fill="#cf2b2b" stroke="#fff" stroke-width="0.8"/><text x="984.5" y="72" font-family="Liberation Sans" font-weight="bold" font-size="7.5" fill="#000" stroke="#fff" stroke-width="1.6" paint-order="stroke" text-anchor="middle" textLength="12" lengthAdjust="spacingAndGlyphs">#10</text><text x="1005" y="63" font-family="Liberation Mono" font-weight="bold" font-size="7" fill="#9b9b9b" text-anchor="middle" textLength="16" lengthAdjust="spacingAndGlyphs">HTML</text><text x="1006.5" y="71" font-family="Liberation Mono" font-weight="bold" font-size="7" fill="#9b9b9b" text-anchor="middle" textLength="13" lengthAdjust="spacingAndGlyphs">TXT</text><path d="M997.5,65 v4 h2" fill="none" stroke="#9b9b9b"/><text x="1028" y="69" font-family="Liberation Sans" font-weight="bold" font-size="11" fill="#9b9b9b" text-anchor="middle" textLength="16" lengthAdjust="spacingAndGlyphs">&lt;TAG</text><text x="1051" y="68.5" font-family="Liberation Sans" font-weight="bold" font-size="11" fill="#9b9b9b" text-anchor="middle" textLength="16" lengthAdjust="spacingAndGlyphs">&lt;tag</text><path d="M1066.5,71.5 V56.5 H1074 L1077,59.5" fill="none" stroke="#9b9b9b"/><path d="M1068.5,58.5 H1073" stroke="#9b9b9b" stroke-dasharray="1,1"/><rect x="1068" y="60" width="1" height="10" fill="#9b9b9b" opacity=".7"/><circle cx="1076.5" cy="66.5" r="5.3" fill="#fff" stroke="#9b9b9b" stroke-width="1.5"/><path d="M1071.5,64.5 H1081.5 M1071.5,68.5 H1081.5 M1074.5,61.5 V71.5 M1078.5,61.5 V71.5" stroke="#9b9b9b" stroke-width="1.2"/><path d="M1090,58 H1104 V61.5 L1100,71 H1094.5 L1090,61.5 Z" fill="#9b9b9b"/><rect x="1091" y="59" width="12" height="2" fill="#fff"/><rect x="1096" y="61" width="2" height="8" fill="#fff"/><g transform="translate(1120,64)"><path d="M5.2,-3.8 A6.3,6.3 0 0 0 -5.9,-2" fill="none" stroke="#e0302a" stroke-width="2.6"/><path d="M-5.9,-2 A6.3,6.3 0 0 0 -5.9,2" fill="none" stroke="#f5b400" stroke-width="2.6"/><path d="M-5.9,2 A6.3,6.3 0 0 0 5.5,3" fill="none" stroke="#2e9b48" stroke-width="2.6"/><path d="M5.5,3 A6.3,6.3 0 0 0 6.4,0 H0.5" fill="none" stroke="#3f7ee8" stroke-width="2.6"/></g><rect x="1133" y="51" width="1" height="25" fill="#a3a3a3"/><rect x="1134" y="51" width="1" height="25" fill="#fff"/><rect x="1140" y="54" width="1" height="2" fill="#8f8f8f"/><rect x="1139" y="55" width="1" height="1" fill="#8f8f8f"/><rect x="1139" y="56" width="2" height="1" fill="#fafafa"/><rect x="1140" y="58" width="1" height="2" fill="#8f8f8f"/><rect x="1139" y="59" width="1" height="1" fill="#8f8f8f"/><rect x="1139" y="60" width="2" height="1" fill="#fafafa"/><rect x="1140" y="62" width="1" height="2" fill="#8f8f8f"/><rect x="1139" y="63" width="1" height="1" fill="#8f8f8f"/><rect x="1139" y="64" width="2" height="1" fill="#fafafa"/><rect x="1140" y="66" width="1" height="2" fill="#8f8f8f"/><rect x="1139" y="67" width="1" height="1" fill="#8f8f8f"/><rect x="1139" y="68" width="2" height="1" fill="#fafafa"/><rect x="1140" y="70" width="1" height="2" fill="#8f8f8f"/><rect x="1139" y="71" width="1" height="1" fill="#8f8f8f"/><rect x="1139" y="72" width="2" height="1" fill="#fafafa"/><rect x="1148.5" y="57.5" width="15" height="12" fill="none" stroke="#9b9b9b"/><rect x="1148" y="57" width="16" height="1.5" fill="#9b9b9b"/><path d="M1154,60 L1159,63.5 L1154,67 Z" fill="#9b9b9b"/><rect x="1171.5" y="57.5" width="15" height="12" fill="none" stroke="#9b9b9b"/><rect x="1171" y="57" width="16" height="1.5" fill="#9b9b9b"/><rect x="1186" y="58" width="2" height="3" fill="#f0f0f0"/><text x="1179" y="68.5" font-family="Liberation Sans" font-size="7" fill="#9b9b9b" text-anchor="middle" textLength="13" lengthAdjust="spacingAndGlyphs">1010</text><rect x="1195" y="58" width="14" height="12" fill="#3f3f3f"/><rect x="1196" y="59" width="12" height="1" fill="#fff"/><text x="1196" y="68" font-family="Liberation Mono" font-weight="bold" font-size="6.5" fill="#fff" textLength="12" lengthAdjust="spacingAndGlyphs">C:\_</text><rect x="1215" y="51" width="1" height="25" fill="#a3a3a3"/><rect x="1216" y="51" width="1" height="25" fill="#fff"/><rect x="1221" y="54" width="1" height="2" fill="#8f8f8f"/><rect x="1220" y="55" width="1" height="1" fill="#8f8f8f"/><rect x="1220" y="56" width="2" height="1" fill="#fafafa"/><rect x="1221" y="58" width="1" height="2" fill="#8f8f8f"/><rect x="1220" y="59" width="1" height="1" fill="#8f8f8f"/><rect x="1220" y="60" width="2" height="1" fill="#fafafa"/><rect x="1221" y="62" width="1" height="2" fill="#8f8f8f"/><rect x="1220" y="63" width="1" height="1" fill="#8f8f8f"/><rect x="1220" y="64" width="2" height="1" fill="#fafafa"/><rect x="1221" y="66" width="1" height="2" fill="#8f8f8f"/><rect x="1220" y="67" width="1" height="1" fill="#8f8f8f"/><rect x="1220" y="68" width="2" height="1" fill="#fafafa"/><rect x="1221" y="70" width="1" height="2" fill="#8f8f8f"/><rect x="1220" y="71" width="1" height="1" fill="#8f8f8f"/><rect x="1220" y="72" width="2" height="1" fill="#fafafa"/><rect x="1233.5" y="58.5" width="10" height="10" fill="#fff" stroke="#666"/><rect x="1236" y="61" width="5" height="5" fill="#d22a2f"/><rect x="1253.5" y="61.5" width="4" height="3" rx="1" fill="none" stroke="#555"/><rect x="1259.5" y="61.5" width="4" height="3" rx="1" fill="none" stroke="#555"/><path d="M1253.5,61.5 H1263.5 M1254,61 L1256.5,58.3 L1257.8,59.8 M1264,61 L1266.5,58.3 L1267.8,59.8" fill="none" stroke="#555"/><rect x="1274" y="51" width="1" height="26" fill="#a3a3a3"/></svg><!--/TB-->
<div class="a" style="left:0;top:77px;width:85px;height:2px;background:#f7f7f7"></div><div class="a" style="left:0;top:79px;width:85px;height:1px;background:#dcdcdc"></div>
<div class="a tab" style="left:0;width:85px"><span class="a" style="left:16px;top:5px">1.. New1.txt</span></div>
<div class="a tab" style="left:85px;width:153px;background:#d9e8f7"><span class="a" style="left:18px;top:5px;font-weight:bold">2.. product_options.tcl</span></div>
<div class="a" id="pbody"></div>
<div class="a" style="left:0;top:99px;width:30px;height:22px;background:#fff;border-top:1px solid #dadada;border-right:1px solid #dadada"></div><div class="a" style="left:0;top:120px;width:29px;height:2px;background:#fff"></div>
<div class="a ptab" style="left:29px;width:29px"></div>
<div class="a ptab" style="left:57px;width:31px"></div>
<div class="a ptab" style="left:87px;width:31px"></div>
<div class="a ptab" style="left:117px;width:29px"></div>
<div class="a" style="left:64px;top:156px;width:1px;height:26px;background:#a0a0a0"></div>
<div class="a" id="tree"></div><div class="a" style="left:0;top:649px;width:173px;height:2px;background:#fff"></div><div class="a" style="left:0;top:651px;width:174px;height:1px;background:#dadada"></div>
<div class="a" style="left:19px;top:202px;width:21px;height:16px;background:#d9d9d9"></div>
<div class="a" style="left:40px;top:202px;width:35px;height:16px;background:#d9e8f7"></div>
<div class="a tt" style="left:28px;top:187px;transform:scaleX(0.92);transform-origin:0 0">New project</div>
<div class="a tt" style="left:43px;top:203px;transform:scaleX(0.89);transform-origin:0 0">Folder</div>
<div class="a" style="left:13px;top:201px;width:1px;height:10px;border-left:1px dotted #808080"></div>
<div class="a" style="left:13px;top:210px;width:7px;height:1px;border-top:1px dotted #808080"></div>
<!--PN--><svg class="a" style="left:0;top:0" width="180" height="230"><polygon points="3,106 7,102 15,102 11,106" fill="#2b5f98"/><rect x="3" y="107" width="8" height="7" fill="#2b5f98"/><polygon points="12,106 15,103 15,110 12,114" fill="#2b5f98"/><path d="M33,107 h7 l1,-2 h5 v11 h-13 z" fill="#cc9a06"/><rect x="41" y="106" width="4" height="1" fill="#fff"/><rect x="62.5" y="105.5" width="15" height="9" fill="#fff" stroke="#2b5f98" stroke-width="1.2"/><text x="70" y="113" font-family="Liberation Sans" font-weight="bold" font-size="8" fill="#2b5f98" text-anchor="middle" textLength="11" lengthAdjust="spacingAndGlyphs">FTP</text><rect x="69" y="114" width="2" height="2" fill="#2b5f98"/><rect x="61" y="116" width="17" height="1.3" fill="#2b5f98"/><polygon points="100.00,104.00 102.00,109.25 107.61,109.53 103.23,113.05 104.70,118.47 100.00,115.40 95.30,118.47 96.77,113.05 92.39,109.53 98.00,109.25" fill="#d09058"/><path d="M122.5,114.5 V104.5 H135.5 V106" fill="none" stroke="#2b5f98" stroke-width="1.3"/><rect x="122" y="104" width="14" height="2" fill="#2b5f98"/><rect x="124.6" y="108.6" width="12.8" height="9.8" fill="#fff" stroke="#2b5f98" stroke-width="1.3"/><rect x="124" y="108" width="14" height="2.2" fill="#2b5f98"/><path d="M7,133 h7 l1,-2 h5 v11 h-13 z" fill="#cc9a06"/><rect x="15" y="132" width="4" height="1" fill="#fff"/><path d="M19,140 v6 M16,143 h6" stroke="#2b5f98" stroke-width="2"/><path d="M38,133 h7 l1,-2 h5 v11 h-13 z" fill="#cc9a06"/><rect x="46" y="132" width="4" height="1" fill="#fff"/><path d="M47.5,140 L52.5,146 M52.5,140 L47.5,146" stroke="#d22a2f" stroke-width="1.4"/><path d="M66.5,136.5 H79.5 V142.5 L76.5,145.5 H66.5 Z" fill="#fff" stroke="#6f6f6f" stroke-width="1"/><path d="M68,132 v6 M65,135 h6" stroke="#2b5f98" stroke-width="2"/><path d="M8.5,166.5 H21.5 V173.5 L18.5,176.5 H8.5 Z" fill="#fff" stroke="#a3a3a3" stroke-width="1"/><path d="M7.5,162 L12.5,167.5 M12.5,162 L7.5,167.5" stroke="#8a8a8a" stroke-width="1.2"/><circle cx="46" cy="169" r="7" fill="#a3a3a3"/><rect x="45" y="168" width="2" height="5" fill="#fff"/><rect x="45" y="165" width="2" height="2" fill="#fff"/><path d="M86.5,168.5 L91.5,163.5" stroke="#555" stroke-width="1.3"/><path d="M77.5,164.5 L79.5,162.5 H84 L85.5,164.5 V168 L91,173.5 V176 L89.5,177 L84,171.5 H79.5 L77.5,169 Z" fill="#fff" stroke="#555" stroke-width="1"/><circle cx="80.7" cy="165.6" r="1.1" fill="none" stroke="#555" stroke-width=".9"/><line x1="78" y1="176.5" x2="84" y2="170.5" stroke="#cc9a06" stroke-width="2.6"/><line x1="78.6" y1="175.9" x2="83.4" y2="171.1" stroke="#fff" stroke-width=".7" stroke-dasharray="1,1"/><polygon points="6,190 10,186 18,186 14,190" fill="#2b5f98"/><rect x="6" y="191" width="8" height="7" fill="#2b5f98"/><polygon points="15,190 18,187 18,194 15,198" fill="#2b5f98"/><path d="M11,196 h4 l1,-1 h5 v2 h2 l-3,5 h-9 z" fill="#cc9a06"/><path d="M12,197 h8 v1 h-4 l-3,3 h-1z" fill="#fff"/><path d="M22,206 h7 l1,-2 h5 v11 h-13 z" fill="#cc9a06"/><rect x="30" y="205" width="4" height="1" fill="#fff"/></svg><!--/PN-->
<div class="a" id="hsb"></div><div class="a" id="hsbw"></div>
<div class="a" id="hthumb"></div>
<div class="a" style="left:1447px;top:118px;width:15px;height:501px;background:#f0f0f0"></div><div class="a" style="left:1462px;top:51px;width:1px;height:601px;background:#fafafa"></div>
<div class="a" id="vthumb"></div>
<div class="a st" style="left:221px;transform:scaleX(0.95)">26 : 15 (15) / 27&nbsp; [1532]</div>
<div class="a ss" style="left:379px"></div>
<div class="a ss" style="left:429px"></div>
<div class="a ss" style="left:448px"></div>
<div class="a ss" style="left:467px"></div>
<div class="a ss" style="left:505px"></div>
<div class="a ss" style="left:605px"></div>
<div class="a ss" style="left:745px"></div>
<div class="a ss" style="left:805px"></div>
<div class="a st" style="left:662px">Tcl/Tk</div>
<div class="a st" style="left:763px">UNIX</div>
<div class="a st" style="left:810px;transform:scaleX(0.965)">Unicode UTF-8 no BOM (65001)</div>

<svg class="a" style="left:0;top:0" width="1465" height="652">
<defs><linearGradient id="tg" x1="0" y1="0" x2="0" y2="1"><stop offset="0" stop-color="#2f7fb5"/><stop offset="1" stop-color="#4a9fd0"/></linearGradient></defs>
<rect x="7.5" y="6.5" width="9" height="8" fill="url(#tg)" stroke="#000" stroke-width="1"/>
<path d="M8,14 Q8.5,10.5 12,10.5 Q15.5,10.5 16,14 Z" fill="#b9dce6"/>
<path d="M7.5,15.8 V17 L12,21 L16.5,17 V15.8" fill="#fff" stroke="#000" stroke-width="1.1"/>
<path d="M9.8,16.8 H14.2 L12,18.8 Z" fill="#1a5f9a"/>
<rect x="4.5" y="31.5" width="10" height="13" fill="#cfe8f8" stroke="#555" stroke-width="1"/>
<line x1="8.2" y1="41.8" x2="15.5" y2="34.5" stroke="#fff" stroke-width="4.6"/>
<line x1="8.2" y1="41.8" x2="15.5" y2="34.5" stroke="#f7a600" stroke-width="3.2"/>
<line x1="15.2" y1="34.8" x2="16" y2="34" stroke="#777" stroke-width="3.2"/>
<line x1="16" y1="34" x2="17.3" y2="32.7" stroke="#f26775" stroke-width="3.4" stroke-linecap="round"/>
<path d="M6.3,43.7 L6.9,40.6 L9.4,43.1 Z" fill="#000" stroke="#000" stroke-width=".8"/>
<rect x="1344" y="13" width="10" height="1" fill="#8a8a8a"/>
<rect x="1389.5" y="8.5" width="9" height="9" fill="none" stroke="#8a8a8a"/>
<path d="M1435,8 L1445.5,18.5 M1445.5,8 L1435,18.5" stroke="#8a8a8a" stroke-width="1"/>
<rect x="1411" y="41" width="6" height="2" fill="#7d8fa3"/>
<path d="M1432.5,36 V35.5 H1437.5 V39.5" fill="none" stroke="#7d8fa3" stroke-width="1"/><rect x="1432" y="35" width="6" height="1.5" fill="#7d8fa3"/>
<rect x="1430.5" y="38.5" width="5" height="4" fill="none" stroke="#7d8fa3" stroke-width="1"/><rect x="1430" y="38" width="6" height="1.6" fill="#7d8fa3"/>
<path d="M1450.5,36.5 L1456.5,42.5 M1456.5,36.5 L1450.5,42.5" stroke="#7d8fa3" stroke-width="1.8"/>
<path d="M190.8,623.3 L187.5,626.8 L190.8,630.3" fill="none" stroke="#505050" stroke-width="2.4"/>
<path d="M1435.8,623.3 L1439.1,626.8 L1435.8,630.3" fill="none" stroke="#505050" stroke-width="2.4"/>
<path d="M1451.5,130 L1454.8,126.7 L1458.1,130" fill="none" stroke="#505050" stroke-width="2.4"/>
<path d="M1451.5,608.3 L1454.8,611.6 L1458.1,608.3" fill="none" stroke="#505050" stroke-width="2.4"/>
<rect x="455" y="642" width="9" height="1" fill="#000090"/><rect x="452" y="644" width="12" height="1" fill="#000090"/><rect x="452" y="646" width="12" height="1" fill="#000090"/><rect x="452" y="648" width="8" height="1" fill="#000090"/>
</svg>
<div class="a ss" style="left:486px"></div>
<div class="a" id="blue"></div>
</body></html>
